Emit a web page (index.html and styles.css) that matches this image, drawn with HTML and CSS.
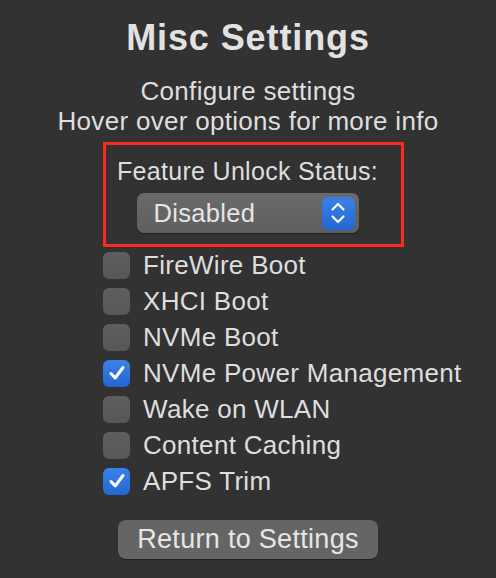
FILE: index.html
```html
<!DOCTYPE html>
<html>
	<head>
		<meta charset="utf-8"/>
		<title>Misc Settings</title>
		<link rel="stylesheet" href="styles.css">
	</head>
	<body>
		<div id="window">
			<h1 class="title">Misc Settings</h1>
			<p class="subtitle">Configure settings<br>Hover over options for more info</p>
			<div id="unlock-container">
				<div class="unlock-label">Feature Unlock Status:</div>
				<div class="popup">
					<span class="popup-value">Disabled</span>
					<span class="stepper">
						<svg width="16" height="24" viewBox="0 0 16 24">
							<path d="M2.5 8.5 L8 3 L13.5 8.5 M2.5 15.5 L8 21 L13.5 15.5" fill="none" stroke="white" stroke-width="2.2" stroke-linecap="round" stroke-linejoin="round"/>
						</svg>
					</span>
				</div>
			</div>
			<ul id="options">
				<li class="option"><span class="box"></span>FireWire Boot</li>
				<li class="option"><span class="box"></span>XHCI Boot</li>
				<li class="option"><span class="box"></span>NVMe Boot</li>
				<li class="option"><span class="box checked"><svg width="20" height="20" viewBox="0 0 20 20"><path d="M4 10.5 L8.2 15 L16 4.5" fill="none" stroke="white" stroke-width="3" stroke-linecap="round" stroke-linejoin="round"/></svg></span>NVMe Power Management</li>
				<li class="option"><span class="box"></span>Wake on WLAN</li>
				<li class="option"><span class="box"></span>Content Caching</li>
				<li class="option"><span class="box checked"><svg width="20" height="20" viewBox="0 0 20 20"><path d="M4 10.5 L8.2 15 L16 4.5" fill="none" stroke="white" stroke-width="3" stroke-linecap="round" stroke-linejoin="round"/></svg></span>APFS Trim</li>
			</ul>
			<div id="return-container">
				<button class="return">Return to Settings</button>
			</div>
		</div>
	</body>
</html>
```

FILE: styles.css
```css
body {
	margin: 0;
	background-color: #323232;
	color: #dedede;
	font-family: "Liberation Sans", Arial, sans-serif;
}
#window {
	width: 496px;
	height: 578px;
	display: flex;
	flex-direction: column;
	align-items: center;
	box-sizing: border-box;
	padding-top: 17px;
}
.title {
	margin: 0;
	font-size: 36px;
	line-height: 42px;
	font-weight: bold;
	letter-spacing: 0.9px;
	color: #e2e2e2;
}
.subtitle {
	margin: 17px 0 0 0;
	font-size: 26px;
	line-height: 30px;
	text-align: center;
	letter-spacing: 0.3px;
}
#unlock-container {
	margin-top: 6px;
	width: 301px;
	height: 105px;
	box-sizing: border-box;
	border: 3px solid #fa2a1e;
	display: flex;
	flex-direction: column;
	align-items: center;
	padding: 12px 12px 0 0;
	margin-left: 11px;
}
.unlock-label {
	font-size: 25px;
	line-height: 28px;
	letter-spacing: 0.3px;
}
.popup {
	margin-top: 8px;
	width: 222px;
	height: 40px;
	box-sizing: border-box;
	border-radius: 7px;
	background: linear-gradient(#6a6a6a, #5f5f5f);
	box-shadow: 0 1px 1px rgba(0, 0, 0, 0.35);
	display: flex;
	align-items: center;
	justify-content: space-between;
	padding: 0 4px 0 17px;
}
.popup-value {
	font-size: 25.5px;
	letter-spacing: 0.3px;
	color: #e6e6e6;
}
.stepper {
	width: 33px;
	height: 33px;
	border-radius: 6px;
	background: linear-gradient(#3a82ea, #2366d2);
	display: flex;
	align-items: center;
	justify-content: center;
}
#options {
	list-style: none;
	margin: 0;
	padding: 0;
	align-self: flex-start;
	margin-left: 103px;
}
.option {
	display: flex;
	align-items: center;
	height: 36px;
	font-size: 26px;
	letter-spacing: 0.3px;
}
.box {
	width: 27px;
	height: 27px;
	box-sizing: border-box;
	border-radius: 6px;
	background: linear-gradient(#5e5e5e, #575757);
	margin-right: 13px;
	display: flex;
	align-items: center;
	justify-content: center;
}
.box.checked {
	background: linear-gradient(#3a82ea, #2366d2);
}
#return-container {
	margin-top: 21px;
}
.return {
	width: 260px;
	height: 39px;
	border: none;
	border-radius: 8px;
	background-color: #656565;
	box-shadow: 0 1px 1px rgba(0, 0, 0, 0.35);
	color: #e6e6e6;
	font-family: "Liberation Sans", Arial, sans-serif;
	font-size: 27px;
	letter-spacing: 0.3px;
	padding: 0;
}
```
